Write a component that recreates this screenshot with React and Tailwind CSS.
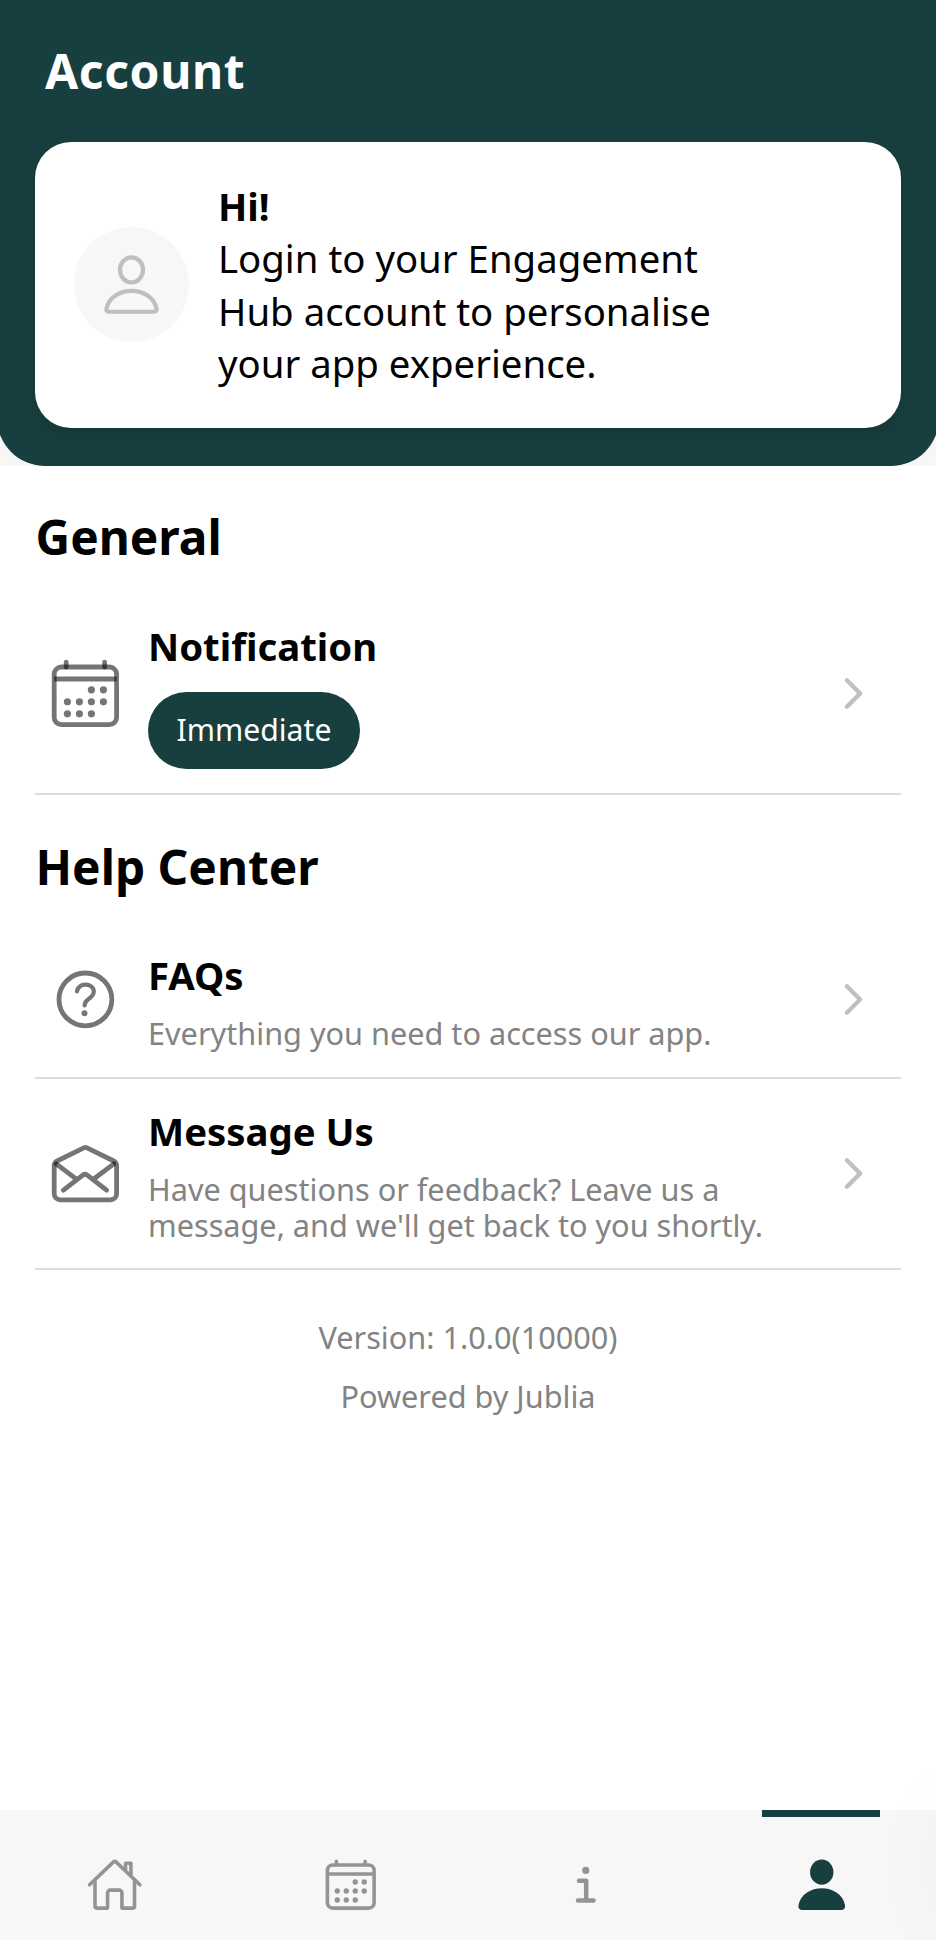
import {
  IoCalendarOutline,
  IoChevronForward,
  IoHelpCircleOutline,
  IoHomeOutline,
  IoInformationOutline,
  IoMailOpenOutline,
} from "react-icons/io5";

function PersonOutline({ className }) {
  return (
    <svg viewBox="0 0 512 512" fill="none" stroke="currentColor" strokeWidth="32" className={className}>
      <ellipse cx="256" cy="144" rx="88" ry="96" />
      <path
        strokeMiterlimit="10"
        d="M256 304c-87 0-175.3 48-191.64 138.6C62.39 453.52 68.57 464 80 464h352c11.44 0 17.62-10.48 15.65-21.4C431.3 352 343 304 256 304z"
      />
    </svg>
  );
}

function PersonSolid({ className }) {
  return (
    <svg viewBox="0 0 512 512" fill="currentColor" className={className}>
      <ellipse cx="256" cy="144" rx="104" ry="112" />
      <path d="M432 480H80a31 31 0 01-24.2-11.13c-6.5-7.77-9.12-18.38-7.18-29.11C57.06 392.94 83.4 353.61 124.8 326c36.78-24.51 83.37-38 131.2-38s94.42 13.5 131.2 38c41.4 27.6 67.74 66.93 76.18 113.75 1.94 10.73-.68 21.34-7.18 29.11A31 31 0 01432 480z" />
    </svg>
  );
}

function Header() {
  return (
    <div className="bg-[#f7f7f7]">
      <header className="h-[466px] rounded-b-[48px] bg-[#183f3f] px-[38px] pt-[39px]">
        <h1 className="pl-[10px] text-[48px] leading-[64px] font-bold tracking-[0.6px] text-white">Account</h1>
        <div className="mt-[38.5px] flex h-[286px] items-center rounded-[36px] bg-white pl-[38.5px] shadow-[0_9px_24px_rgba(0,0,0,0.13)]">
          <div className="flex size-[115px] shrink-0 items-center justify-center rounded-full bg-[#f7f7f7] text-[#bfbfbf]">
            <PersonOutline className="size-[67px]" />
          </div>
          <div className="ml-[29.5px] w-[530px] text-[38.35px] leading-[52.3px] text-black">
            <p className="font-bold">Hi!</p>
            <p>Login to your Engagement Hub account to personalise your app experience.</p>
          </div>
        </div>
      </header>
    </div>
  );
}

function Row({ icon: Icon, title, className, children }) {
  return (
    <div className={"flex items-center border-b-2 border-[#dcdcdc] " + className}>
      <div className="flex w-[101px] shrink-0 justify-center text-black/54">
        <Icon className="size-[76.8px]" />
      </div>
      <div className="ml-[12px] h-full grow">
        <h3 className="text-[38.35px] leading-[52px] font-bold text-black">{title}</h3>
        {children}
      </div>
      <IoChevronForward className="mr-[24.5px] size-[47px] shrink-0 text-[#c0c0c0]" />
    </div>
  );
}

const tabs = [
  { name: "home", icon: IoHomeOutline },
  { name: "agenda", icon: IoCalendarOutline },
  { name: "info", icon: IoInformationOutline },
  { name: "account", icon: PersonSolid, active: true },
];

export default function App() {
  return (
    <div className="relative h-[1940px] w-[936px] overflow-hidden bg-white font-['Noto_Sans',sans-serif]">
      <div className="-ml-[3px] flex h-full w-[942px] flex-col">
        <Header />
        <main className="grow px-[38px] text-[30.66px] leading-[35.6px] text-[#838383]">
          <h2 className="mt-[43px] pl-[0.5px] text-[47.85px] leading-[56px] font-bold text-black">General</h2>
          <Row icon={IoCalendarOutline} title="Notification" className="mt-[28px] h-[202px] [&>div:nth-child(2)]:pt-[27px]">
            <div className="mt-[19.5px] flex h-[77px] w-[212px] justify-center rounded-full bg-[#183f3f] pt-[17px] text-[30.2px] leading-[42px] text-white">
              Immediate
            </div>
          </Row>
          <h2 className="mt-[44px] pl-[0.5px] text-[47.85px] leading-[56px] font-bold text-black">Help Center</h2>
          <Row icon={IoHelpCircleOutline} title="FAQs" className="mt-[27.5px] h-[156px] [&>div:nth-child(2)]:pt-[26.5px]">
            <p className="mt-[15px]">Everything you need to access our app.</p>
          </Row>
          <Row icon={IoMailOpenOutline} title="Message Us" className="h-[191px] [&>div:nth-child(2)]:pt-[26.5px]">
            <p className="mt-[15px] w-[630px]">Have questions or feedback? Leave us a message, and we'll get back to you shortly.</p>
          </Row>
          <div className="mt-[46.5px] flex flex-col items-center gap-[17px] leading-[42px]">
            <p>Version: 1.0.0(10000)</p>
            <p>Powered by Jublia</p>
          </div>
        </main>
        <nav className="grid h-[130px] grid-cols-4 bg-[#f7f7f7]">
          {tabs.map(({ name, icon: Icon, active }) => (
            <div key={name} className={"flex flex-col items-center " + (active ? "text-[#183f3f]" : "text-[#949498]")}>
              <div className={"h-[7px] w-[118px] " + (active ? "bg-[#183f3f]" : "")} />
              <Icon className="mt-[38.5px] size-[57.5px]" />
            </div>
          ))}
        </nav>
      </div>
      <div className="absolute bottom-0 left-[938px] h-[150px] w-10 shadow-[0_0_72px_rgba(0,0,0,0.04)]" />
    </div>
  );
}
